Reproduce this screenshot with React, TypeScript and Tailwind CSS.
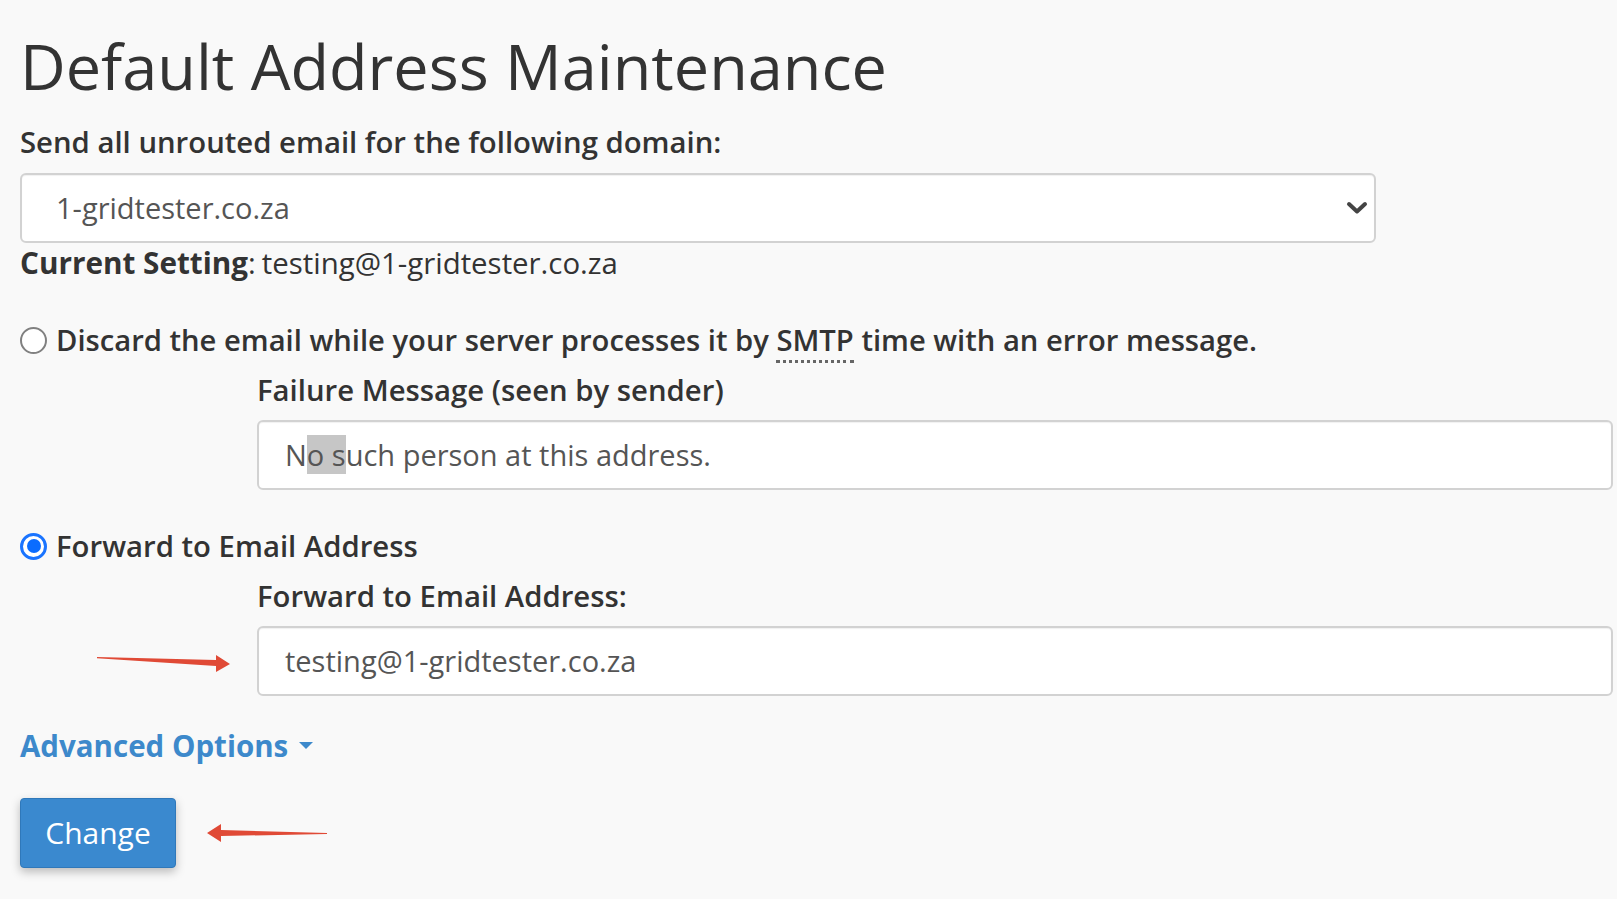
import React from 'react';

// ─── Annotation arrows (red, tapered) ────────────────────────────────────────
const ArrowRight: React.FC = () => (
  <svg width="134" height="22" viewBox="0 0 134 22" className="block">
    <polygon points="0,5 119,8 119,3 133,12 119,20 119,14 0,6.2" fill="#e04a36" />
  </svg>
);

const ArrowLeft: React.FC = () => (
  <svg width="122" height="22" viewBox="0 0 122 22" className="block">
    <polygon points="1,11 15,2 15,8 121,11 121,12 15,14 15,20" fill="#e04a36" />
  </svg>
);

const Radio: React.FC<{ checked?: boolean }> = ({ checked }) =>
  checked ? (
    <span className="flex h-[27px] w-[27px] shrink-0 items-center justify-center rounded-full border-[3px] border-[#1a74ff] bg-white">
      <span className="h-[14px] w-[14px] rounded-full bg-[#0a6cff]" />
    </span>
  ) : (
    <span className="h-[27px] w-[27px] shrink-0 rounded-full border-2 border-[#808080] bg-white" />
  );

const fieldCls =
  'flex h-[70px] w-[1356px] items-center rounded-[6px] border-2 border-[#d2d2d2] bg-white text-[29px] text-[#555] shadow-[inset_0_1px_1px_rgba(0,0,0,0.06)]';

export default function App() {
  return (
    <div className="min-h-screen bg-[#f9f9f9] pl-[20px] pt-[23px] font-['Open_Sans',sans-serif] text-[30px] leading-[40px] text-[#333]">
      <h1 className="text-[63px] font-normal leading-[86px] text-[#333]">Default Address Maintenance</h1>

      <div className="mt-[13px] text-[29.3px] font-semibold">Send all unrouted email for the following domain:</div>

      {/* Domain select */}
      <div className={`mt-[11px] justify-between pl-[34px] pr-[6px] ${fieldCls}`}>
        <span>1-gridtester.co.za</span>
        <svg width="22" height="14" viewBox="0 0 22 14">
          <path d="M3 3 L11 10.5 L19 3" fill="none" stroke="#444" strokeWidth="4" strokeLinecap="round" strokeLinejoin="round" />
        </svg>
      </div>

      <div className="flex items-baseline">
        <span className="text-[29.7px] font-bold">Current Setting</span>
        <span className="text-[29.4px]">:</span>
        <span className="ml-[6px] text-[29.4px]">testing@1-gridtester.co.za</span>
      </div>

      {/* Option 1: discard */}
      <div className="mt-[37px] flex items-center gap-[9px]">
        <Radio />
        <span className="text-[29.2px] font-semibold">
          Discard the email while your server processes it by{' '}
          <abbr className="no-underline border-b-[3px] border-dotted border-[#666]" title="Simple Mail Transfer Protocol">
            SMTP
          </abbr>{' '}
          time with an error message.
        </span>
      </div>
      <div className="ml-[237px]">
        <div className="mt-[10px] text-[29.3px] font-semibold">Failure Message (seen by sender)</div>
        <div className={`mt-[10px] pl-[26px] ${fieldCls}`}>
          <span>
            N<span className="bg-[#c6c6c6]">o s</span>uch person at this address.
          </span>
        </div>
      </div>

      {/* Option 2: forward */}
      <div className="mt-[36px] flex items-center gap-[9px]">
        <Radio checked />
        <span className="text-[29.3px] font-semibold">Forward to Email Address</span>
      </div>
      <div className="mt-[10px] ml-[237px] text-[29.3px] font-semibold">Forward to Email Address:</div>
      <div className="mt-[10px] flex items-center">
        <div className="flex w-[237px] items-center pl-[77px] pt-[4px]">
          <ArrowRight />
        </div>
        <div className={`pl-[26px] ${fieldCls}`}>testing@1-gridtester.co.za</div>
      </div>

      {/* Advanced options toggle */}
      <div className="mt-[30px] flex items-center gap-[11px] text-[29.5px] font-bold text-[#3d89cb]">
        <span>Advanced Options</span>
        <svg width="14" height="8" viewBox="0 0 14 8">
          <polygon points="0,0 14,0 7,7" fill="#3d89cb" />
        </svg>
      </div>

      <div className="mt-[32px] flex items-center gap-[30px]">
        <button className="h-[70px] w-[156px] rounded-[4px] border border-[#2f78ba] bg-[#3a89cf] text-[30px] text-white shadow-[0_4px_10px_rgba(0,0,0,0.25)]">
          Change
        </button>
        <ArrowLeft />
      </div>
    </div>
  );
}
